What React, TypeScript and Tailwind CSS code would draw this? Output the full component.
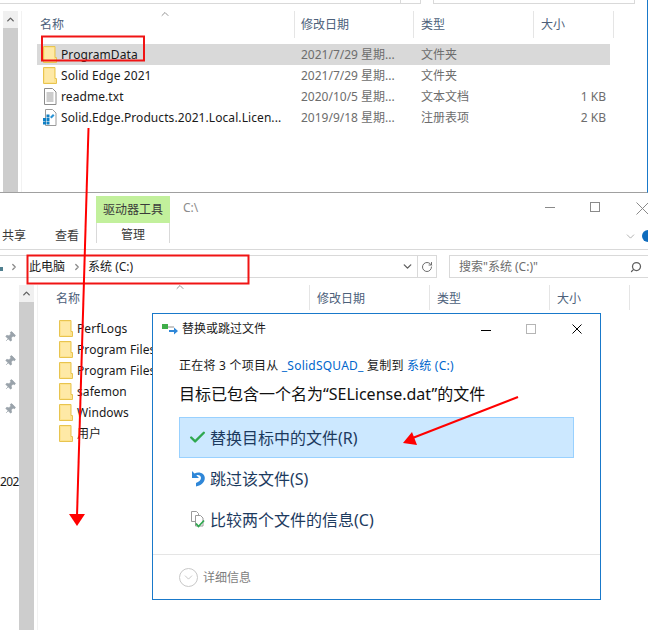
import { Check, ChevronDown, ChevronRight, ChevronUp, Pin, RotateCw, Search } from 'lucide-react'

const FONT = { fontFamily: '"Noto Sans", "Noto Sans CJK SC", sans-serif' }

function FolderIcon() {
  return (
    <svg width="14" height="17" viewBox="0 0 14 17" className="shrink-0">
      <path d="M1 1h11v11h1v4H1z" fill="#fde38f" />
      <path d="M0.500 0.500h11.500v11h1.500v5H0.500z" fill="none" stroke="#e8c44f" />
      <path d="M2 2h9v13H2z" fill="#fee9a6" />
    </svg>
  )
}

function TextIcon() {
  return (
    <svg width="14" height="17" viewBox="0 0 14 17" className="shrink-0">
      <path d="M1.500 0.500h8l3.500 3.500v12.500H1.500z" fill="#fff" stroke="#8c8c8c" />
      <path d="M3.500 5h7M3.500 7h7M3.500 9h7M3.500 11h7M3.500 13h7" stroke="#9a9a9a" />
    </svg>
  )
}

function RegIcon() {
  return (
    <svg width="14" height="17" viewBox="0 0 14 17" className="shrink-0">
      <path d="M2.500 0.500h7l3.500 3.500v12.500H2.500z" fill="#fff" stroke="#9a9a9a" />
      <path d="M0 9h3v3H0zM3.500 9h3v3h-3zM0 12.500h3v3H0zM3.500 12.500h3v3h-3zM3.500 5.500h3v3h-3z" fill="#0f7fc4" />
      <path d="M7 8l3-3 1.500 1.500-3 3z" fill="#2a93d5" />
    </svg>
  )
}

function CloseGlyph({ size, color }: { size: number; color: string }) {
  return (
    <svg width={size} height={size} viewBox={`0 0 ${size} ${size}`} className="shrink-0">
      <path d={`M0.500 0.500L${size - 0.5} ${size - 0.5}M${size - 0.5} 0.500L0.500 ${size - 0.5}`} stroke={color} fill="none" />
    </svg>
  )
}

function HeaderCell({ label, className }: { label: string; className: string }) {
  return <div className={`h-full shrink-0 pt-[5px] leading-[18px] border-r border-[#e5e5e5] text-[#4c607a] ${className}`}>{label}</div>
}

const TOP_ROWS = [
  { name: 'ProgramData', date: '2021/7/29 星期...', type: '文件夹', size: '', icon: <FolderIcon />, selected: true },
  { name: 'Solid Edge 2021', date: '2021/7/29 星期...', type: '文件夹', size: '', icon: <FolderIcon /> },
  { name: 'readme.txt', date: '2020/10/5 星期...', type: '文本文档', size: '1 KB', icon: <TextIcon /> },
  { name: 'Solid.Edge.Products.2021.Local.Licen...', date: '2019/9/18 星期...', type: '注册表项', size: '2 KB', icon: <RegIcon /> },
]

const LOWER_ROWS = ['PerfLogs', 'Program Files', 'Program Files (x86)', 'safemon', 'Windows', '用户']

function Scrollbar() {
  return (
    <div className="w-[15px] shrink-0 flex flex-col bg-[#cdcdcd]">
      <div className="h-[17px] bg-[#f0f0f0] flex items-center justify-center">
        <ChevronUp size={11} strokeWidth={3} className="text-[#606060]" />
      </div>
    </div>
  )
}

function TopWindow() {
  return (
    <div className="h-[193px] border-b border-[#a0a0a0] border-r border-r-[#1979ca] flex flex-col">
      <div className="h-[4px] flex shrink-0">
        <div className="w-[421px] border-b border-r border-[#d9d9d9] relative">
          <div className="absolute left-[400px] top-0 h-full border-l border-[#d9d9d9]" />
        </div>
        <div className="w-[202px] ml-[12px] border-b border-x border-[#d9d9d9]" />
      </div>
      <div className="flex-1 flex pl-[3px] pt-[7px] min-h-0">
        <Scrollbar />
        <div className="ml-[3px] border-l border-[#f2f2f2] flex-1 relative pl-[15px]">
          <ChevronUp size={12} strokeWidth={1.5} className="absolute left-[137px] -top-[3px] text-[#707070]" />
          <div className="flex h-[27px] text-[12px] -ml-[15px]">
            <HeaderCell label="名称" className="w-[273px] pl-[18px]" />
            <HeaderCell label="修改日期" className="w-[119px] pl-[6px]" />
            <HeaderCell label="类型" className="w-[120px] pl-[7px]" />
            <HeaderCell label="大小" className="w-[80px] pl-[7px]" />
          </div>
          <div className="mt-[6px] w-[573px] text-[12px]">
            {TOP_ROWS.map((row) => (
              <div key={row.name} className={`flex items-center h-[21px] ${row.selected ? 'bg-[#d9d9d9]' : ''}`}>
                <div className="w-[24px] pl-[6px]">{row.icon}</div>
                <div className="w-[240px] truncate text-[#1a1a1a] text-[12px] tracking-[0.08px]">{row.name}</div>
                <div className="w-[120px] text-[#6d6d6d]">{row.date}</div>
                <div className="w-[100px] text-[#6d6d6d]">{row.type}</div>
                <div className="w-[85px] text-right text-[#6d6d6d]">{row.size}</div>
              </div>
            ))}
          </div>
        </div>
      </div>
    </div>
  )
}

function LowerWindow() {
  return (
    <div className="h-[437px] flex flex-col bg-white">
      <div className="h-[30px] flex shrink-0">
        <div className="ml-[96px] mt-[3px] w-[74px] h-[27px] bg-[#c2f09c] text-[12px] text-[#3a3a3a] flex items-center justify-center">驱动器工具</div>
        <div className="ml-[13px] mt-[7px] text-[12px] leading-[16px] text-[#8c8c8c]">C:\</div>
        <div className="ml-auto flex items-start pt-[9px]">
          <div className="w-[10px] h-px mt-[5px] bg-[#8a8a8a] mr-[35px]" />
          <div className="w-[10px] h-[10px] border border-[#8a8a8a] mr-[36px]" />
          <div className="-mr-[1px]">
            <CloseGlyph size={13} color="#8a8a8a" />
          </div>
        </div>
      </div>
      <div className="h-[27px] flex border-b border-[#d9d9d9] text-[12px] text-[#3a3a3a] shrink-0">
        <div className="ml-[2px] mt-[4px] leading-[18px]">共享</div>
        <div className="ml-[29px] mt-[4px] leading-[18px]">查看</div>
        <div className="ml-[17px] w-[74px] h-[20px] border-x border-[#d9d9d9] text-center leading-[24px]">管理</div>
        <div className="ml-auto flex items-center h-[26px] -mr-[6px]">
          <ChevronDown size={13} strokeWidth={1.2} className="text-[#8a8a8a] mr-[5px]" />
          <div className="w-[12px] h-[12px] rounded-full bg-[#0f6cbd]" />
        </div>
      </div>
      <div className="mt-[5px] h-[23px] flex text-[12px] shrink-0">
        <div className="w-[417px] border-y border-[#d9d9d9] flex items-center text-[#1a1a1a]">
          <div className="w-[3px] h-[4px] mt-[5px] bg-[#4f7f8f] shrink-0" />
          <ChevronRight size={10} strokeWidth={3} className="ml-[6px] text-[#8a8a8a]" />
          <span className="ml-[10px]">此电脑</span>
          <ChevronRight size={10} strokeWidth={3} className="ml-[7px] text-[#8a8a8a]" />
          <span className="ml-[6px]">系统 (C:)</span>
          <ChevronDown size={13} strokeWidth={2.500} className="ml-auto mr-[3px] text-[#5f5f5f]" />
        </div>
        <div className="w-[20px] border border-[#d9d9d9] flex items-center justify-center">
          <RotateCw size={12} strokeWidth={2} className="text-[#6d6d6d]" />
        </div>
        <div className="ml-[12px] flex-1 border border-r-0 border-[#d9d9d9] flex items-center pl-[9px] text-[#6d6d6d]">
          <span>搜索"系统 (C:)"</span>
          <Search size={12} strokeWidth={2.500} className="ml-auto mr-[6px] -scale-x-100 text-[#5f5f5f]" />
        </div>
      </div>
      <div className="flex-1 flex mt-[7px] min-h-0">
        <div className="w-[19px] shrink-0 flex flex-col items-center pt-[46px] gap-[12px] relative text-[12px]">
          {[0, 1, 2, 3].map((n) => (
            <Pin key={n} size={12} fill="#9aa3ab" strokeWidth={1.5} className="rotate-45 text-[#9aa3ab]" />
          ))}
          <div className="absolute left-0 top-[188px] text-[#1a1a1a] tracking-[-0.6px]">202</div>
        </div>
        <Scrollbar />
        <div className="ml-[3px] border-l border-[#f2f2f2] flex-1 relative">
          <ChevronUp size={12} strokeWidth={1.5} className="absolute left-[136px] -top-[4px] text-[#707070]" />
          <div className="flex h-[25px] text-[12px]">
            <HeaderCell label="名称" className="w-[272px] pl-[18px]" />
            <HeaderCell label="修改日期" className="w-[120px] pl-[7px]" />
            <HeaderCell label="类型" className="w-[120px] pl-[7px]" />
            <HeaderCell label="大小" className="w-[80px] pl-[7px]" />
          </div>
          <div className="mt-[8px] text-[12px]">
            {LOWER_ROWS.map((name) => (
              <div key={name} className="flex items-center h-[21px] pl-[21px] text-[#1a1a1a] tracking-[0.08px]">
                <FolderIcon />
                <span className="ml-[4px]">{name}</span>
              </div>
            ))}
          </div>
        </div>
      </div>
    </div>
  )
}

function DialogIcon() {
  return (
    <svg width="16" height="14" viewBox="0 0 16 14">
      <path d="M0 2h6v5H0z" fill="#3fae49" />
      <path d="M6 4h6v2H6z" fill="#c8c8c8" />
      <path d="M7 8h5V5.500L16 9l-4 3.500V10H7z" fill="#2f87d8" />
    </svg>
  )
}

function SkipIcon() {
  return (
    <svg width="14" height="16" viewBox="0 0 14 16">
      <path d="M1 0v7h7L5.300 4.300C7.300 3.300 10 4.400 10 7c0 2.200-2.300 4-5 5v3.500c4.500-.8 8.800-3.800 8.800-8.500 0-5-6-7.100-10.300-4.500z" fill="#2f87d8" />
    </svg>
  )
}

function CompareIcon() {
  return (
    <svg width="16" height="17" viewBox="0 0 16 17">
      <path d="M1.500 0.500h5l2 2v8h-7z" fill="#fff" stroke="#9a9a9a" />
      <path d="M5.500 4.500h5l2.500 2.500v8h-7.500z" fill="#fff" stroke="#9a9a9a" />
      <path d="M6 12.500l2.500 3 5.500-6" fill="none" stroke="#2fa84f" strokeWidth="1.800" />
    </svg>
  )
}

function OptionRow({ icon, label, active }: { icon: React.ReactNode; label: string; active?: boolean }) {
  return (
    <div className={`h-[41px] flex items-center border text-[16px] text-[#1c3a5e] ${active ? 'bg-[#cce8ff] border-[#99d1ff]' : 'border-transparent'}`}>
      <div className="w-[30px] flex justify-center pl-[5px] shrink-0">{icon}</div>
      <span>{label}</span>
    </div>
  )
}

function ReplaceDialog() {
  return (
    <div className="absolute left-[152px] top-[313px] w-[449px] h-[287px] bg-white border border-[#1979ca] flex flex-col">
      <div className="h-[30px] flex items-center pl-[9px] text-[12px] text-[#1a1a1a] shrink-0">
        <DialogIcon />
        <span className="ml-[4px]">替换或跳过文件</span>
        <div className="ml-auto flex items-center pr-[18px]">
          <div className="w-[10px] h-px bg-black mt-[3px] mr-[35px]" />
          <div className="w-[10px] h-[10px] border border-[#b5b5b5] mr-[36px]" />
          <CloseGlyph size={10} color="#000000" />
        </div>
      </div>
      <div className="flex-1 px-[26px] pt-[13px]">
        <div className="text-[12px] leading-[18px] text-[#1a1a1a] whitespace-nowrap tracking-[0.23px]">
          正在将 3 个项目从 <span className="text-[#0066cc]">_SolidSQUAD_</span> 复制到 <span className="text-[#0066cc]">系统 (C:)</span>
        </div>
        <div className="mt-[7px] text-[16px] leading-[24px] text-[#111] whitespace-nowrap">目标已包含一个名为“SELicense.dat”的文件</div>
        <div className="mt-[11px] w-[395px] flex flex-col">
          <OptionRow active icon={<Check size={19} strokeWidth={3} className="text-[#2fa84f]" />} label="替换目标中的文件(R)" />
          <OptionRow icon={<SkipIcon />} label="跳过该文件(S)" />
          <OptionRow icon={<CompareIcon />} label="比较两个文件的信息(C)" />
        </div>
      </div>
      <div className="h-[45px] border-t border-[#e5e5e5] flex items-center pl-[26px] pt-[1px] text-[12px] text-[#7d7d7d] shrink-0">
        <div className="w-[19px] h-[19px] rounded-full border border-[#c8c8c8] flex items-center justify-center">
          <ChevronDown size={13} strokeWidth={1} className="text-[#9a9a9a]" />
        </div>
        <span className="ml-[5px]">详细信息</span>
      </div>
    </div>
  )
}

function Annotations() {
  return (
    <svg width="648" height="630" className="absolute left-0 top-0 pointer-events-none">
      <rect x="42" y="36.500" width="102" height="24" fill="none" stroke="#f01414" strokeWidth="2" />
      <rect x="27.500" y="255.500" width="221" height="28" fill="none" stroke="#f01414" strokeWidth="2" />
      <path d="M88.500 128L77 516" stroke="#ff0000" strokeWidth="2" />
      <path d="M69 514h16l-8 12z" fill="#ff0000" />
      <path d="M518 397L410 439" stroke="#ff0000" strokeWidth="2" />
      <path d="M403 443l9-11 5 13z" fill="#ff0000" />
    </svg>
  )
}

export default function App() {
  return (
    <div className="relative w-[648px] h-[630px] overflow-hidden bg-white" style={FONT}>
      <TopWindow />
      <LowerWindow />
      <ReplaceDialog />
      <Annotations />
    </div>
  )
}
